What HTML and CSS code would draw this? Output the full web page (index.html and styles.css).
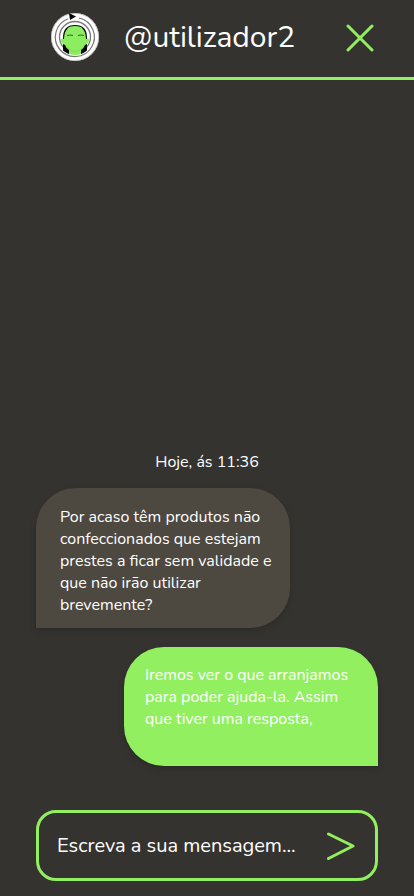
FILE: index.html
```html
<!DOCTYPE html>
<html lang="pt">
<head>
<meta charset="utf-8">
<meta name="viewport" content="width=device-width, initial-scale=1">
<title>@utilizador2</title>
<link rel="stylesheet" href="styles.css">
</head>
<body>
<header class="header">
  <svg class="avatar" viewBox="0 0 48 48" aria-hidden="true">
    <defs><clipPath id="face"><circle cx="24" cy="24" r="18"/></clipPath></defs>
    <circle cx="24" cy="24" r="24" fill="#fff"/>
    <circle cx="24" cy="24" r="23.6" fill="none" stroke="#aaa" stroke-width=".6"/>
    <path d="M28 5A19.500 19.500 0 1 1 17 5.800" fill="none" stroke="#777" stroke-width="1.200"/>
    <circle cx="24" cy="24" r="15.500" fill="none" stroke="#777" stroke-width="1.300"/>
    <path d="M18 0l7 3.500-6 3.500z" fill="#050505"/>
    <g clip-path="url(#face)">
      <path d="M12 41V25c0-9 4-13 12-13s12 4 12 13v16z" fill="#050505"/>
      <path d="M18 14q6-2 12 0 5 4 5 12c4-2 4 2 1 5l-2 1q-1 3-4 5v5H18v-5q-3-2-4-5l-2-1c-3-3-3-7 1-5q0-8 5-12z" fill="#8ded60"/>
      <path d="M16 22.500q3-1 6 0M27 22.500q3-1 6 0" fill="none" stroke="#286e2c" stroke-width="1.200"/>
      <path d="M18 36q6 5 12 0" fill="none" stroke="#82dc59" stroke-width="1"/>
    </g>
  </svg>
  <h1 class="username">@utilizador2</h1>
  <button class="icon-button" type="button" aria-label="Fechar">
    <svg class="close-icon" viewBox="0 0 28 28"><path d="M2 2l24 24M26 2L2 26"/></svg>
  </button>
</header>
<main class="chat">
  <p class="time">Hoje, ás 11:36</p>
  <p class="bubble received">Por acaso têm produtos não confeccionados que estejam prestes a ficar sem validade e que não irão utilizar brevemente?</p>
  <p class="bubble sent">Iremos ver o que arranjamos para poder ajuda-la. Assim que tiver uma resposta,</p>
</main>
<form class="composer">
  <input class="message" type="text" aria-label="Mensagem" placeholder="Escreva a sua mensagem...">
  <button class="icon-button" type="submit" aria-label="Enviar">
    <svg class="send-icon" viewBox="0 0 28 28"><path d="M1.500 2L26 14 1.500 26.500"/></svg>
  </button>
</form>
</body>
</html>
```
FILE: styles.css
```css
* {
  box-sizing: border-box;
}

body {
  display: flex;
  flex-direction: column;
  min-height: 100vh;
  margin: 0;
  background: #353330;
  color: #fff;
  font-family: Nunito, Lato, sans-serif;
}

.header {
  display: flex;
  align-items: center;
  height: 80px;
  padding: 0 40px 2px 51px;
  border-bottom: 3px solid #92ef60;
}

.avatar {
  width: 48px;
  height: 48px;
  flex: none;
  margin-bottom: 2px;
}

.username {
  flex: 1;
  margin: 0 0 0 25px;
  font-size: 30px;
  font-weight: 400;
  line-height: 40px;
}

.icon-button {
  display: flex;
  flex: none;
  padding: 0;
  border: 0;
  background: none;
  cursor: pointer;
}

.icon-button svg {
  width: 28px;
  height: 28px;
  fill: none;
  stroke: #92ef60;
  stroke-width: 3;
  stroke-linecap: round;
  stroke-linejoin: round;
}

.chat {
  display: flex;
  flex: 1;
  flex-direction: column;
  justify-content: flex-end;
  padding: 0 36px 44px;
}

.time {
  margin: 0 0 15px;
  font-size: 16px;
  line-height: 22px;
  text-align: center;
}

.bubble {
  width: 254px;
  margin: 0;
  font-size: 16px;
  line-height: 22px;
  box-shadow: 0 3px 6px rgba(0, 0, 0, 0.16);
}

.received {
  min-height: 140px;
  padding: 18px 16px 12px 24px;
  border-radius: 40px 40px 40px 0;
  background: #4d4840;
}

.sent {
  align-self: flex-end;
  min-height: 119px;
  margin-top: 19px;
  padding: 17px 24px 12px 21px;
  border-radius: 40px 40px 0 40px;
  background: #92ef60;
}

.composer {
  display: flex;
  align-items: center;
  height: 71px;
  margin: 0 36px 15px;
  padding: 0 20px 0 18px;
  border: 3px solid #92ef60;
  border-radius: 20px;
}

.message {
  flex: 1;
  min-width: 0;
  padding: 0;
  border: 0;
  outline: 0;
  background: none;
  color: #fff;
  font: inherit;
  font-size: 20px;
  line-height: 28px;
}

.message::placeholder {
  color: #fff;
  opacity: 1;
}
```
